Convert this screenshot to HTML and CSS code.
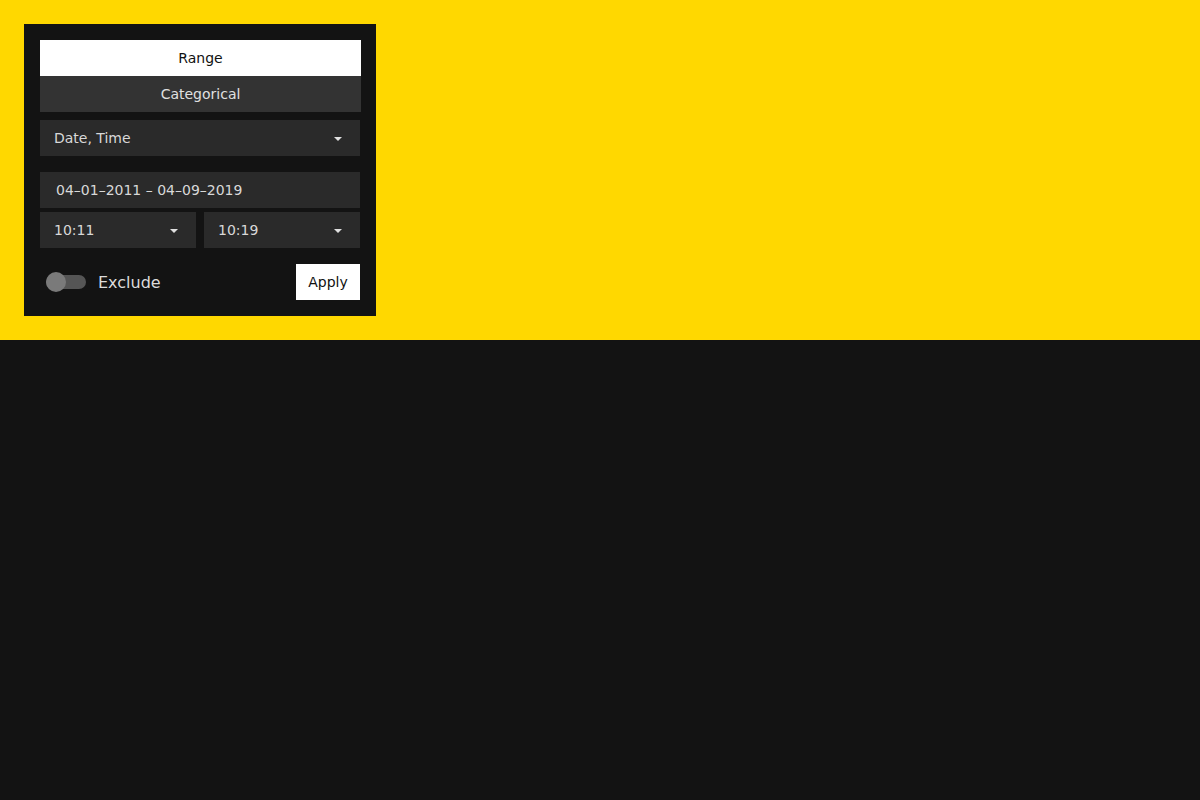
FILE: index.html
```html
<!DOCTYPE html>
<html>
<head>
<meta charset="utf-8">
<link rel="stylesheet" href="styles.css">
</head>
<body>
<div class="top">
  <div class="panel">
    <div class="tabs">
      <div class="tab active">Range</div>
      <div class="tab">Categorical</div>
    </div>
    <div class="select full">
      <span>Date, Time</span>
      <span class="caret"></span>
    </div>
    <div class="field">04–01–2011 – 04–09–2019</div>
    <div class="times">
      <div class="select"><span>10:11</span><span class="caret"></span></div>
      <div class="select"><span>10:19</span><span class="caret"></span></div>
    </div>
    <div class="actions">
      <label class="toggle">
        <span class="track"><span class="knob"></span></span>
        <span class="label">Exclude</span>
      </label>
      <button class="apply">Apply</button>
    </div>
  </div>
</div>
</body>
</html>
```
FILE: styles.css
```css
html, body {
  margin: 0;
  padding: 0;
  background: #131313;
  font-family: "DejaVu Sans", sans-serif;
}
.top {
  background: #ffd800;
  height: 340px;
  padding: 24px;
  box-sizing: border-box;
}
.panel {
  width: 352px;
  background: #131313;
  padding: 16px;
  box-sizing: border-box;
  display: flex;
  flex-direction: column;
}
.tabs {
  display: flex;
  flex-direction: column;
  width: 321px;
}
.tab {
  height: 36px;
  display: flex;
  align-items: center;
  justify-content: center;
  background: #333333;
  color: #e0e0e0;
  font-size: 14px;
}
.tab.active {
  background: #ffffff;
  color: #111111;
}
.select {
  height: 36px;
  background: #2a2a2a;
  color: #d8d8d8;
  font-size: 14px;
  display: flex;
  align-items: center;
  justify-content: space-between;
  padding: 0 18px 0 14px;
  box-sizing: border-box;
}
.select.full {
  margin-top: 8px;
}
.caret {
  width: 0;
  height: 0;
  border-left: 4px solid transparent;
  border-right: 4px solid transparent;
  border-top: 4px solid #e0e0e0;
  margin-top: 1px;
}
.field {
  margin-top: 16px;
  height: 36px;
  background: #2a2a2a;
  color: #d8d8d8;
  font-size: 14px;
  display: flex;
  align-items: center;
  padding-left: 16px;
}
.times {
  margin-top: 4px;
  display: grid;
  grid-template-columns: 1fr 1fr;
  gap: 8px;
}
.actions {
  margin-top: 16px;
  height: 36px;
  display: flex;
  align-items: center;
  justify-content: space-between;
}
.toggle {
  display: flex;
  align-items: center;
  padding-left: 6px;
}
.track {
  position: relative;
  width: 40px;
  height: 14px;
  border-radius: 7px;
  background: #555555;
}
.knob {
  position: absolute;
  left: 0;
  top: -3px;
  width: 20px;
  height: 20px;
  border-radius: 50%;
  background: #7a7a7a;
}
.label {
  margin-left: 12px;
  color: #dcdcdc;
  font-size: 16px;
}
.apply {
  width: 64px;
  height: 36px;
  border: none;
  background: #ffffff;
  color: #111111;
  font-family: "DejaVu Sans", sans-serif;
  font-size: 14px;
  padding: 0;
}
```
